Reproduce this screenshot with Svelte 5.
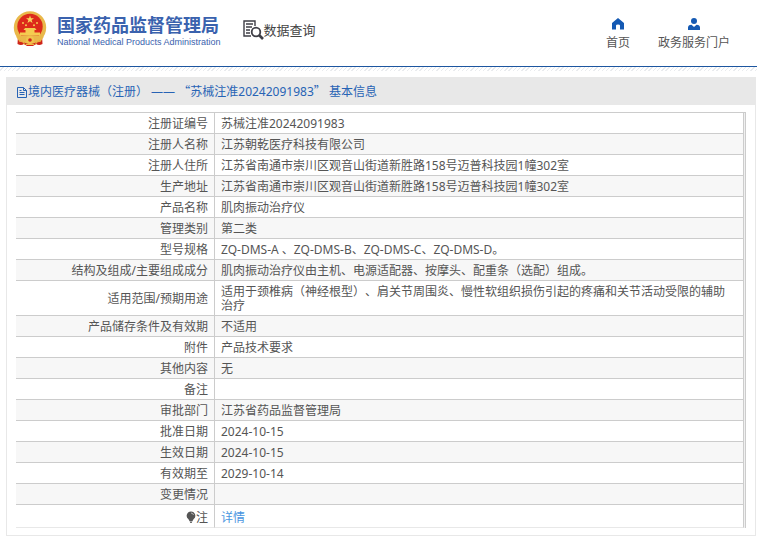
<script>
  const rows = [
    ['注册证编号', '苏械注准20242091983'],
    ['注册人名称', '江苏朝乾医疗科技有限公司'],
    ['注册人住所', '江苏省南通市崇川区观音山街道新胜路158号迈普科技园1幢302室'],
    ['生产地址', '江苏省南通市崇川区观音山街道新胜路158号迈普科技园1幢302室'],
    ['产品名称', '肌肉振动治疗仪'],
    ['管理类别', '第二类'],
    ['型号规格', 'ZQ-DMS-A 、ZQ-DMS-B、ZQ-DMS-C、ZQ-DMS-D。'],
    ['结构及组成/主要组成成分', '肌肉振动治疗仪由主机、电源适配器、按摩头、配重条（选配）组成。'],
    ['适用范围/预期用途', '适用于颈椎病（神经根型）、肩关节周围炎、慢性软组织损伤引起的疼痛和关节活动受限的辅助治疗'],
    ['产品储存条件及有效期', '不适用'],
    ['附件', '产品技术要求'],
    ['其他内容', '无'],
    ['备注', ''],
    ['审批部门', '江苏省药品监督管理局'],
    ['批准日期', '2024-10-15'],
    ['生效日期', '2024-10-15'],
    ['有效期至', '2029-10-14'],
    ['变更情况', '']
  ];
</script>

<header>
  <div class="brand">
    <svg class="emblem" width="34" height="36" viewBox="0 0 34 36" aria-hidden="true">
      <path d="M5 24 L4.500 33 Q8 35 11 33 L14 35 H20 L23 33 Q26 35 29.500 33 L29 24Z" fill="#cf2419" />
      <circle cx="17" cy="16.500" r="16.200" fill="#e9b84a" />
      <circle cx="17" cy="15.500" r="12.700" fill="#dd2a1b" />
      <path d="M17 4.500l1 2.800h3l-2.400 1.800.9 2.900-2.500-1.700-2.500 1.700.9-2.900L13 7.300h3z" fill="#f8d75c" />
      <g fill="#f5cb50">
        <circle cx="10" cy="12" r="1" /><circle cx="13" cy="14.200" r="1" />
        <circle cx="21" cy="14.200" r="1" /><circle cx="24" cy="12" r="1" />
        <path d="M12 17h10l1.500 2h-13zM12.500 19h9v2.500h-9zM7 21.500h20v3H7z" />
      </g>
      <path d="M3 25.500Q17 22.500 31 25.500L28 30Q17 27 6 30Z" fill="#e9b84a" />
      <circle cx="17" cy="29" r="4" fill="#f1c34d" />
      <circle cx="17" cy="29" r="1.800" fill="#cf2419" />
      <path d="M6 30l4 1 2 3M28 30l-4 1-2 3M13 33.500h8" fill="none" stroke="#efb944" />
    </svg>
    <div class="names">
      <div class="name">国家药品监督管理局</div>
      <div class="english">National Medical Products Administration</div>
    </div>
  </div>
  <div class="query">
    <svg width="21" height="20" viewBox="0 0 21 20" fill="none" stroke="#3e3e46" aria-hidden="true">
      <path d="M12 6V1H1v15h7M3 4h7M3 7h6M3 10h4M3 13h4" stroke-width="1.400" />
      <circle cx="13" cy="12" r="4.300" stroke-width="1.800" />
      <path d="M16 15l4 4" stroke-width="2.600" />
    </svg>
    <span>数据查询</span>
  </div>
  <nav>
    <a href="#home">
      <svg width="12" height="12" viewBox="0 0 12 12" aria-hidden="true">
        <path d="M6 0L0 5v6.500h4V7.500q0-1 2-1t2 1v4h4V5z" fill="#1459b3" />
      </svg>
      首页
    </a>
    <a href="#portal">
      <svg width="12" height="12" viewBox="0 0 12 12" aria-hidden="true">
        <circle cx="6" cy="3" r="3" fill="#1459b3" />
        <path d="M0 12V9.500Q0 7 3.500 6.700L6 9l2.500-2.300Q12 7 12 9.500V12z" fill="#1459b3" />
      </svg>
      政务服务门户
    </a>
  </nav>
</header>
<div class="hatch"></div>

<main>
  <h1>
    <svg width="10" height="11" viewBox="0 0 10 11" fill="none" stroke="#2763b5" aria-hidden="true">
      <path d="M.5.500h6l3 3v7h-9zM6.500.500v3h3M2.500 3.500h2M2.500 5.500h5M2.500 7.500h5" />
    </svg>
    <span>境内医疗器械（注册） —— <span class="quote">“</span>苏械注准20242091983<span class="quote">”</span> 基本信息</span>
  </h1>
  <div class="body">
    <table>
      <tbody>
        {#each rows as [label, value]}
          <tr><th scope="row">{label}</th><td>{value}</td></tr>
        {/each}
        <tr class="note">
          <th scope="row">
            <svg width="10" height="12" viewBox="0 0 10 12" aria-hidden="true">
              <path d="M5 .500a4.300 4.300 0 0 0-2.500 7.800L3.500 10h3l1-1.700A4.300 4.300 0 0 0 5 .500zM3.500 10.500h3L5.500 12h-1z" fill="#555" />
              <path d="M5 2q2 0 2.500 2" fill="none" stroke="#bbb" />
            </svg>注
          </th>
          <td><a href="#detail">详情</a></td>
        </tr>
      </tbody>
    </table>
  </div>
</main>

<style>
  :global(body) {
    background: #fff;
    color: #555;
    font: 12px/14px "Noto Sans", "Noto Sans CJK SC", sans-serif;
    text-spacing-trim: space-all;
  }
  header {
    display: flex;
    align-items: flex-start;
    box-sizing: border-box;
    height: 67px;
    padding: 0 27px 0 13px;
    border-bottom: 1px solid #1d56a0;
  }
  .brand {
    display: flex;
    gap: 10px;
    padding-top: 11px;
    color: #3a62ae;
    white-space: nowrap;
  }
  .name {
    font: bold 18px/26px "Noto Sans CJK SC", sans-serif;
  }
  .english {
    font: 9px/11px "Liberation Sans", sans-serif;
  }
  .query {
    display: flex;
    align-items: center;
    margin: 20px 0 0 22px;
    color: #444;
    font-size: 13px;
    line-height: 20px;
    white-space: nowrap;
  }
  nav {
    display: flex;
    gap: 28px;
    margin-left: auto;
    padding-top: 18px;
  }
  nav a {
    display: flex;
    flex-direction: column;
    align-items: center;
    gap: 6px;
    color: #555;
    text-decoration: none;
    white-space: nowrap;
  }
  .hatch {
    height: 4px;
    background: repeating-linear-gradient(135deg, #fff 0 2px, #e9ebee 2px 3px);
  }
  main {
    margin: 6px 1px 0 6px;
  }
  h1 {
    display: flex;
    align-items: center;
    gap: 1px;
    margin: 0;
    padding: 8px 11px 6px;
    background: #e8e8e8;
    color: #2763b5;
    font-size: 12px;
    font-weight: normal;
    line-height: 14px;
  }
  .quote {
    font-family: "Noto Sans CJK SC", sans-serif;
    line-height: 1;
  }
  .body {
    padding: 7px 9px;
    border: 1px solid #e8e8e8;
    border-top: 0;
  }
  table {
    width: 100%;
    border: solid #ccc;
    border-width: 1px 1px 0 0;
    border-collapse: separate;
    border-spacing: 0;
    padding-right: 1px;
    background: #f0f0f0;
  }
  tr {
    background: #fff;
  }
  tr:nth-child(even) {
    background: #f7f7f7;
  }
  th,
  td {
    padding: 4px 6px 2px;
    border: solid #ccc;
    border-width: 0 1px 1px 0;
    font-weight: normal;
    text-align: left;
  }
  td {
    padding-right: 12px;
  }
  th {
    box-sizing: border-box;
    width: 199px;
    text-align: right;
  }
  .note th,
  .note td {
    padding-top: 6px;
    border-bottom-color: #e8e8e8;
  }
  .note svg {
    vertical-align: -1px;
  }
  .note a {
    color: #4a95e0;
    text-decoration: none;
  }
</style>
